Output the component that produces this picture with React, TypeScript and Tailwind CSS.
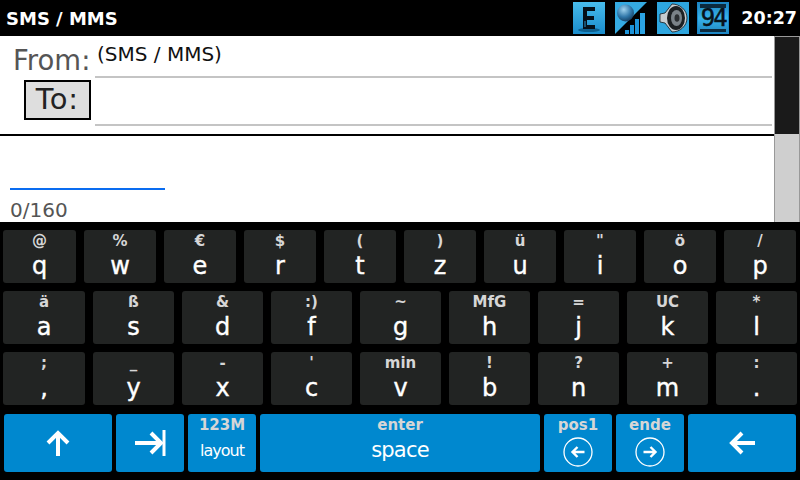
const font = "font-['DejaVu_Sans',sans-serif]";

type K = { top: string; main: string };

const row1: K[] = [
  { top: '@', main: 'q' }, { top: '%', main: 'w' }, { top: '€', main: 'e' }, { top: '$', main: 'r' }, { top: '(', main: 't' },
  { top: ')', main: 'z' }, { top: 'ü', main: 'u' }, { top: '"', main: 'i' }, { top: 'ö', main: 'o' }, { top: '/', main: 'p' },
];
const row2: K[] = [
  { top: 'ä', main: 'a' }, { top: 'ß', main: 's' }, { top: '&', main: 'd' }, { top: ':)', main: 'f' }, { top: '~', main: 'g' },
  { top: 'MfG', main: 'h' }, { top: '=', main: 'j' }, { top: 'UC', main: 'k' }, { top: '*', main: 'l' },
];
const row3: K[] = [
  { top: ';', main: ',' }, { top: '_', main: 'y' }, { top: '-', main: 'x' }, { top: "'", main: 'c' }, { top: 'min', main: 'v' },
  { top: '!', main: 'b' }, { top: '?', main: 'n' }, { top: '+', main: 'm' }, { top: ':', main: '.' },
];

function Key({ k }: { k: K }) {
  return (
    <div className="flex h-[53px] flex-col items-center rounded-[3px] bg-[#222423]">
      <span className="mt-[2px] h-[19px] text-[15px] font-bold leading-[19px] text-[#d6d6d6]">{k.top}</span>
      <span className="text-[24px] leading-[30px] text-white [-webkit-text-stroke:0.4px_white]">{k.main}</span>
    </div>
  );
}

function BlueKey({ className, children }: { className: string; children: React.ReactNode }) {
  return <div className={`flex h-[58px] flex-col items-center rounded-[3px] bg-[#0088cf] ${className}`}>{children}</div>;
}

function CircleArrow({ dir }: { dir: 'left' | 'right' }) {
  return (
    <svg width="30" height="30" viewBox="0 0 30 30" fill="none" stroke="white" className="mt-px">
      <circle cx="15" cy="15" r="14" strokeWidth="1.3" />
      {dir === 'left' ? (
        <path d="M21.5 15H10M14.5 10l-5 5 5 5" strokeWidth="2.4" />
      ) : (
        <path d="M8.5 15H20M15.5 10l5 5-5 5" strokeWidth="2.4" />
      )}
    </svg>
  );
}

function EIcon() {
  return (
    <svg width="32" height="32" viewBox="0 0 32 32">
      <defs>
        <linearGradient id="blueA" x1="0" y1="0" x2="0" y2="1">
          <stop offset="0" stopColor="#48bcec" />
          <stop offset="1" stopColor="#1a8ccc" />
        </linearGradient>
      </defs>
      <rect width="32" height="32" fill="url(#blueA)" />
      <ellipse cx="16" cy="28" rx="11" ry="2" fill="#0d5f8e" />
      <path d="M10 5h12v4h-8v5h7v4h-7v5h8v4H10z" fill="#051018" />
      <path d="M11 19h2v6h-2z" fill="#17506f" />
    </svg>
  );
}

function SignalIcon() {
  return (
    <svg width="32" height="32" viewBox="0 0 32 32">
      <defs>
        <radialGradient id="globe" cx="0.4" cy="0.3" r="0.8">
          <stop offset="0" stopColor="#9fd2ee" />
          <stop offset="0.55" stopColor="#2f76a8" />
          <stop offset="1" stopColor="#10314f" />
        </radialGradient>
      </defs>
      <rect width="32" height="32" fill="#000" />
      <path d="M0 0h32L0 32z" fill="#35abe2" />
      <circle cx="10.5" cy="11" r="8.5" fill="url(#globe)" />
      <rect x="10" y="28" width="4" height="4" fill="#1c93d8" />
      <rect x="15" y="23" width="4" height="9" fill="#1c93d8" />
      <rect x="20" y="17" width="4" height="15" fill="#1c93d8" />
      <rect x="25" y="11" width="5" height="21" fill="#2ba3e2" />
    </svg>
  );
}

function SpeakerIcon() {
  return (
    <svg width="32" height="32" viewBox="0 0 32 32">
      <rect width="32" height="32" fill="#2ea6df" />
      <path d="M3 12l5-1 7-9c8 0 15 6 15 14s-7 14-15 14l-7-9-5-1z" fill="#c6ccd0" stroke="#14181b" strokeWidth="0.8" />
      <ellipse cx="19" cy="16" rx="9" ry="12" fill="#1c2023" />
      <ellipse cx="19.5" cy="16" rx="5.5" ry="8" fill="#7a8288" />
      <ellipse cx="20" cy="16" rx="2.5" ry="3.8" fill="#2a2e31" />
    </svg>
  );
}

function BatteryIcon() {
  return (
    <div className="relative flex h-8 w-8 items-center justify-center border border-[#1a86c8] bg-gradient-to-b from-[#1f86c0] via-[#38b4ec] to-[#1f86c0]">
      <div className="absolute left-[2px] right-[2px] top-[1px] h-[4px] bg-[#0c2a3e]" />
      <div className="absolute bottom-[1px] left-[2px] right-[2px] h-[3px] bg-[#0c2a3e]" />
      <span className="font-['DejaVu_Sans_Mono',monospace] text-[24px] leading-none tracking-[-2px] text-[#08131b] [-webkit-text-stroke:0.5px_#08131b]">94</span>
    </div>
  );
}

export default function App() {
  return (
    <div className={`flex h-[480px] w-[800px] flex-col overflow-hidden bg-black ${font}`}>
      {/* status bar */}
      <div className="flex h-9 items-center justify-between pl-[6px] pr-[3px]">
        <span className="text-[18px] font-bold text-white">SMS / MMS</span>
        <div className="flex items-center">
          <EIcon />
          <div className="ml-[10px]"><SignalIcon /></div>
          <div className="ml-[10px]"><SpeakerIcon /></div>
          <div className="ml-[8px]"><BatteryIcon /></div>
          <span className="ml-[12px] text-[17.5px] font-bold text-white">20:27</span>
        </div>
      </div>

      {/* message area */}
      <div className="flex h-[186px] bg-white">
        <div className="flex w-[774px] flex-col">
          <div className="flex h-[100px] flex-col border-b-2 border-black">
            <div className="flex h-[42px]">
              <span className="w-[95px] pl-[13px] pt-[5px] text-[27.5px] leading-[38px] text-[#555]">From:</span>
              <div className="mr-[2px] flex-1 border-b-2 border-[#c4c4c4] pl-[2px] pt-[4px] text-[20px] leading-[28px] text-[#111]">(SMS / MMS)</div>
            </div>
            <div className="flex h-[48px]">
              <div className="ml-[24px] mt-[2px] flex h-[40px] w-[67px] items-center justify-center border-2 border-black bg-[#dedede] text-[29px] tracking-[1px] text-[#222]">To:</div>
              <div className="ml-[4px] mr-[2px] flex-1 border-b-2 border-[#c4c4c4]" />
            </div>
          </div>
          <div className="flex flex-1 flex-col justify-end pl-[10px]">
            <div className="h-[2px] w-[155px] bg-[#0a6cf0]" />
            <span className="h-[32px] pt-[8px] text-[20px] leading-[24px] text-[#555]">0/160</span>
          </div>
        </div>
        <div className="flex w-[26px] flex-col border-x border-t border-[#999] bg-[#cfcfcf]">
          <div className="h-[97px] bg-[#1a1a1a]" />
        </div>
      </div>

      {/* keyboard */}
      <div className="flex flex-1 flex-col bg-black px-[3px] pt-2">
        <div className="grid grid-cols-[73px_repeat(9,72px)] gap-x-2">
          {row1.map((k) => <Key key={k.main} k={k} />)}
        </div>
        <div className="mt-2 grid grid-cols-[82px_repeat(8,81px)] gap-x-2">
          {row2.map((k) => <Key key={k.main} k={k} />)}
        </div>
        <div className="mt-2 grid grid-cols-[82px_repeat(8,81px)] gap-x-2">
          {row3.map((k) => <Key key={k.main} k={k} />)}
        </div>
        <div className="ml-px mt-[9px] flex gap-x-1">
          <BlueKey className="w-[108px] justify-center">
            <svg width="24" height="28" viewBox="0 0 24 28" fill="none" stroke="white" strokeWidth="4">
              <path d="M12 27V4M2 14L12 4l10 10" />
            </svg>
          </BlueKey>
          <BlueKey className="w-[68px] justify-center">
            <svg width="32" height="26" viewBox="0 0 32 26" fill="none" stroke="white">
              <path d="M1 13h26M17 3l10 10-10 10" strokeWidth="4" />
              <path d="M30 0v26" strokeWidth="3" />
            </svg>
          </BlueKey>
          <BlueKey className="w-[68px]">
            <span className="text-[15px] font-bold leading-[22px] text-[#d6d6d6]">123M</span>
            <span className="mt-[3px] text-[16px] leading-[24px] tracking-[-1px] text-white">layout</span>
          </BlueKey>
          <BlueKey className="w-[280px]">
            <span className="text-[15px] font-bold leading-[22px] text-[#d6d6d6]">enter</span>
            <span className="text-[21px] leading-[28px] tracking-[-0.8px] text-white">space</span>
          </BlueKey>
          <BlueKey className="w-[68px]">
            <span className="text-[15px] font-bold leading-[22px] text-[#d6d6d6]">pos1</span>
            <CircleArrow dir="left" />
          </BlueKey>
          <BlueKey className="w-[68px]">
            <span className="text-[15px] font-bold leading-[22px] text-[#d6d6d6]">ende</span>
            <CircleArrow dir="right" />
          </BlueKey>
          <BlueKey className="w-[108px] justify-center">
            <svg width="28" height="24" viewBox="0 0 28 24" fill="none" stroke="white" strokeWidth="4">
              <path d="M27 12H4M14 2L4 12l10 10" />
            </svg>
          </BlueKey>
        </div>
      </div>
    </div>
  );
}
